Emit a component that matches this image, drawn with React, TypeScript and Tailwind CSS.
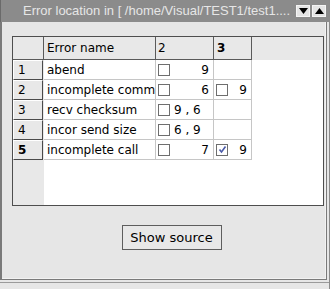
import React from "react";

type Row = {
  id: number;
  name: string;
  c2: { text: string; right: boolean };
  c3?: { checked: boolean; text: string };
};

const rows: Row[] = [
  { id: 1, name: "abend", c2: { text: "9", right: true } },
  { id: 2, name: "incomplete comm", c2: { text: "6", right: true }, c3: { checked: false, text: "9" } },
  { id: 3, name: "recv checksum", c2: { text: "9 , 6", right: false } },
  { id: 4, name: "incor send size", c2: { text: "6 , 9", right: false } },
  { id: 5, name: "incomplete call", c2: { text: "7", right: true }, c3: { checked: true, text: "9" } },
];

function Box({ checked }: { checked?: boolean }) {
  return (
    <span className="w-[12px] h-[12px] shrink-0 bg-white border border-[#6e6e6e] flex items-center justify-center">
      {checked && (
        <svg width="9" height="9" viewBox="0 0 9 9">
          <path d="M1.5 4.5 L3.5 7 L7.5 1.5" stroke="#4a5aa8" strokeWidth="1.6" fill="none" />
        </svg>
      )}
    </span>
  );
}

export default function App() {
  const font = { fontFamily: '"DejaVu Sans", sans-serif' };
  return (
    <div className="w-[330px] h-[289px] bg-[#e6e6e6] overflow-hidden flex flex-col border-r border-[#8a8a8a]" style={font}>
      {/* window title */}
      <div className="h-[22px] bg-[#8b8b8b] flex items-center pl-[22px] pr-[3px] border-l border-[#6a6a6a]">
        <span className="text-[13px] text-[#e6e6e6] whitespace-nowrap flex-1 overflow-hidden" style={{ fontFamily: '"Liberation Sans", Arial, sans-serif' }}>
          Error location in [ /home/Visual/TEST1/test1....
        </span>
        <span className="w-[14px] h-[12px] bg-[#e4e4e4] border border-[#f4f4f4] flex items-center justify-center ml-[2px]">
          <svg width="9" height="6" viewBox="0 0 9 6"><path d="M0 0 H9 L4.5 6 Z" fill="#000" /></svg>
        </span>
        <span className="w-[14px] h-[12px] bg-[#e4e4e4] border border-[#f4f4f4] flex items-center justify-center ml-[2px]">
          <svg width="9" height="6" viewBox="0 0 9 6"><path d="M0 6 H9 L4.5 0 Z" fill="#000" /></svg>
        </span>
      </div>

      {/* body frame */}
      <div className="h-[258px] border-l-2 border-r border-b border-[#7a7a7a] mr-[2px] flex flex-col">
        <div className="h-[257px] border-r border-b border-[#f2f2f2] flex flex-col">
          {/* table */}
          <div className="mt-[14px] ml-[10px] mr-[1px] h-[170px] border border-[#4e4e4e] bg-white flex flex-col text-[12px] text-black">
            {/* header */}
            <div className="flex h-[23px] bg-[#e8e8e8]">
              <div className="w-[31px] border-r border-b border-[#5a5a5a]" />
              <div className="w-[112px] border-r border-b border-[#5a5a5a] pl-[3px] flex items-center">Error name</div>
              <div className="w-[58px] border-r border-b border-[#5a5a5a] pl-[2px] flex items-center">2</div>
              <div className="w-[38px] border-r border-b border-[#5a5a5a] pl-[3px] flex items-center font-bold">3</div>
              <div className="flex-1" />
            </div>
            {rows.map((r) => (
              <div key={r.id} className="flex h-[20px]">
                <div className="w-[31px] bg-[#e8e8e8] flex">
                  <div className={`w-[30px] border-t border-l border-white border-r border-b border-r-[#4a4a4a] border-b-[#4a4a4a] pl-[4px] flex items-center ${r.id === 5 ? "font-bold" : ""}`}>
                    {r.id}
                  </div>
                </div>
                <div className="w-[112px] border-r border-b border-[#c6c6c6] pl-[3px] flex items-center whitespace-nowrap">{r.name}</div>
                <div className="w-[58px] border-r border-b border-[#c6c6c6] pl-[2px] pr-[4px] flex items-center">
                  <Box />
                  <span className={r.c2.right ? "flex-1 text-right" : "pl-[4px] whitespace-pre"}>{r.c2.text}</span>
                </div>
                <div className="w-[38px] border-r border-b border-[#c6c6c6] pl-[2px] pr-[4px] flex items-center">
                  {r.c3 && (
                    <>
                      <Box checked={r.c3.checked} />
                      <span className="flex-1 text-right">{r.c3.text}</span>
                    </>
                  )}
                </div>
                <div className="flex-1" />
              </div>
            ))}
            <div className="flex flex-1">
              <div className="w-[31px] bg-[#e8e8e8]" />
              <div className="flex-1" />
            </div>
          </div>

          <div className="flex justify-center mt-[19px]">
            <button className="w-[100px] h-[25px] ml-[16px] bg-[#e8e8e8] border border-[#5e5e5e] text-[13px] text-black" style={font}>
              Show source
            </button>
          </div>
        </div>
      </div>
      <div className="h-[3px] mt-[2px] border-t border-[#9a9a9a]" />
    </div>
  );
}
